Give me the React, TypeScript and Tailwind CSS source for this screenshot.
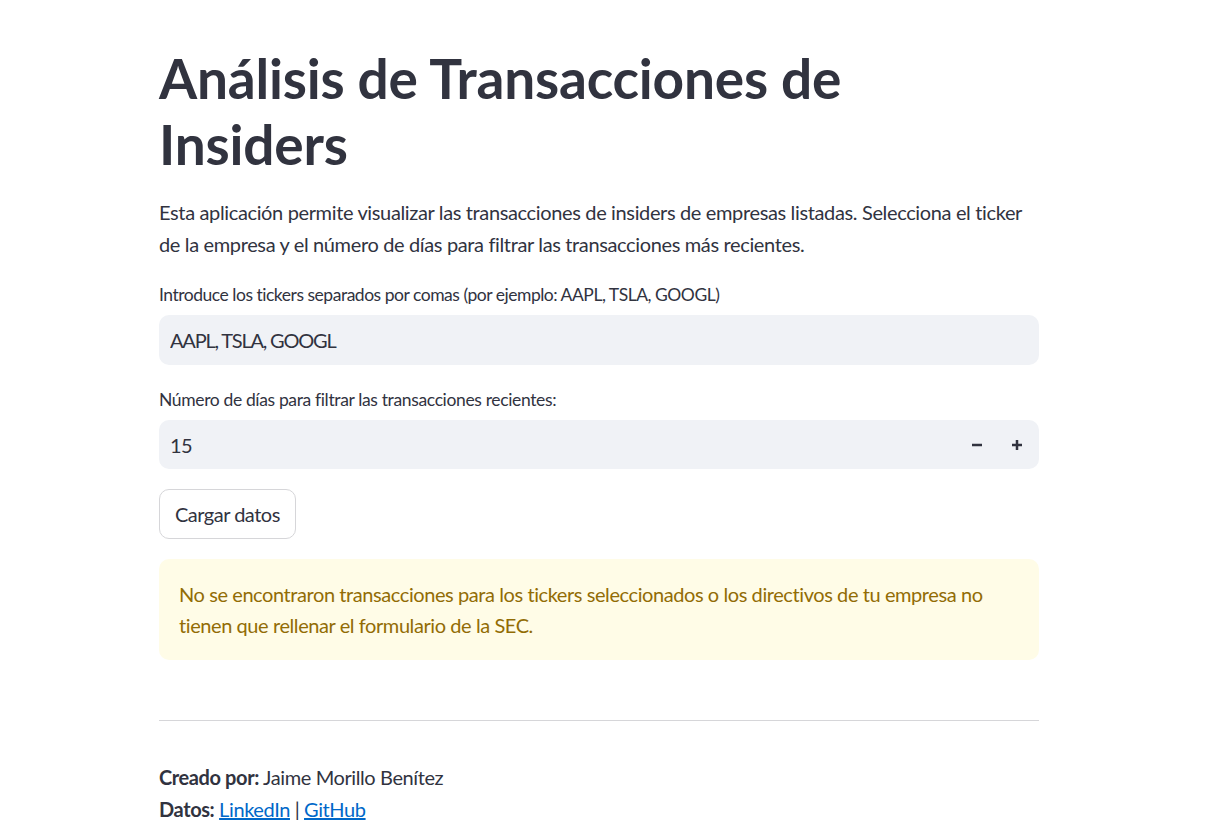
import { useState } from 'react';

export default function App() {
  const [tickers, setTickers] = useState('AAPL, TSLA, GOOGL');
  const [days, setDays] = useState(15);

  return (
    <div className="min-h-screen bg-white text-[#31333F] font-['Lato','Liberation_Sans',sans-serif]">
      <div className="w-[880px] ml-[159px] pt-[45px] pb-[20px]">
        <h1 className="text-[55px] leading-[66px] font-bold tracking-[-0.2px]">
          Análisis de Transacciones de
          <br />
          Insiders
        </h1>

        <p className="mt-[19px] text-[20px] leading-[32px] whitespace-nowrap tracking-[-0.36px]">
          Esta aplicación permite visualizar las transacciones de insiders de empresas listadas. Selecciona el ticker
          <br />
          de la empresa y el número de días para filtrar las transacciones más recientes.
        </p>

        <label className="mt-[20px] h-[30px] flex items-center text-[17.5px] whitespace-nowrap tracking-[-0.48px]">
          Introduce los tickers separados por comas (por ejemplo: AAPL, TSLA, GOOGL)
        </label>
        <input
          value={tickers}
          onChange={e => setTickers(e.target.value)}
          className="mt-[5px] w-full h-[50px] rounded-[10px] bg-[#F0F2F6] px-[11px] text-[20px] tracking-[-1.2px] outline-none"
        />

        <label className="mt-[20px] h-[30px] flex items-center text-[17.5px] whitespace-nowrap tracking-[-0.36px]">
          Número de días para filtrar las transacciones recientes:
        </label>
        <div className="mt-[5px] w-full h-[49px] rounded-[10px] bg-[#F0F2F6] flex items-center">
          <input
            value={days}
            onChange={e => setDays(Number(e.target.value) || 0)}
            className="flex-1 h-full bg-transparent px-[11px] text-[20px] tracking-[-0.5px] outline-none"
          />
          <button onClick={() => setDays(d => d - 1)} className="w-[40px] h-full flex items-center justify-center">
            <svg width="12" height="12" viewBox="0 0 12 12">
              <path d="M1 6h10" stroke="#31333F" strokeWidth="2.5" />
            </svg>
          </button>
          <button onClick={() => setDays(d => d + 1)} className="w-[40px] h-full flex items-center justify-center mr-[2px]">
            <svg width="12" height="12" viewBox="0 0 12 12">
              <path d="M1 6h10M6 1v10" stroke="#31333F" strokeWidth="2.5" />
            </svg>
          </button>
        </div>

        <button className="mt-[20px] h-[50px] px-[15px] rounded-[10px] border border-[#D6D6D9] bg-white text-[20px] tracking-[-0.5px]">
          Cargar datos
        </button>

        <div className="mt-[20px] rounded-[10px] bg-[#FFFCE7] text-[#926C05] px-[20px] pt-[20px] pb-[19px] text-[20px] leading-[31px] whitespace-nowrap tracking-[-0.42px]">
          No se encontraron transacciones para los tickers seleccionados o los directivos de tu empresa no
          <br />
          tienen que rellenar el formulario de la SEC.
        </div>

        <hr className="mt-[60px] border-0 border-t border-[#D6D6D9]" />

        <div className="mt-[40px] text-[20px] leading-[32px] tracking-[-0.4px]">
          <p>
            <span className="font-bold">Creado por:</span> Jaime Morillo Benítez
          </p>
          <p>
            <span className="font-bold">Datos:</span>{' '}
            <a href="#" className="text-[#0068C9] underline">LinkedIn</a> |{' '}
            <a href="#" className="text-[#0068C9] underline">GitHub</a>
          </p>
        </div>
      </div>
    </div>
  );
}
